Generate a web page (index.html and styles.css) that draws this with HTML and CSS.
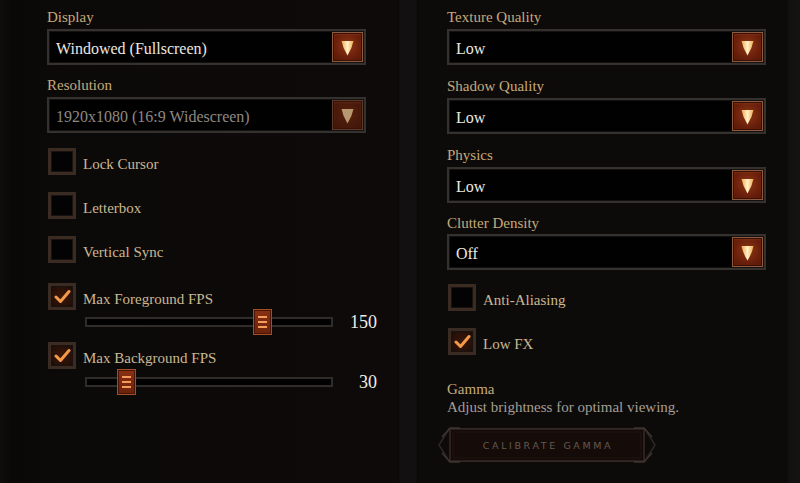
FILE: index.html
```html
<!DOCTYPE html>
<html>
<head>
<meta charset="utf-8">
<link rel="stylesheet" href="styles.css">
</head>
<body>
<div class="screen">
  <section class="panel left">
    <div class="field">
      <div class="label">Display</div>
      <div class="select">
        <span class="value">Windowed (Fullscreen)</span>
        <span class="arrow"><svg width="13" height="16" viewBox="0 0 13 16"><defs><linearGradient id="ag" x1="0" y1="0" x2="1" y2="0"><stop offset="0" stop-color="#f0a850"/><stop offset="0.5" stop-color="#fff2c8"/><stop offset="1" stop-color="#f0a850"/></linearGradient></defs><path d="M0.5 1 H12.5 Q11 8.5 6.5 15.5 Q2 8.5 0.5 1 Z" fill="url(#ag)"/></svg></span>
      </div>
    </div>
    <div class="field">
      <div class="label">Resolution</div>
      <div class="select disabled">
        <span class="value">1920x1080 (16:9 Widescreen)</span>
        <span class="arrow"><svg width="13" height="16" viewBox="0 0 13 16"><path d="M0.5 1 H12.5 Q11 8.5 6.5 15.5 Q2 8.5 0.5 1 Z" fill="#b89870"/></svg></span>
      </div>
    </div>
    <div class="checks">
      <div class="check"><span class="box"></span><span class="ctext">Lock Cursor</span></div>
      <div class="check"><span class="box"></span><span class="ctext">Letterbox</span></div>
      <div class="check"><span class="box"></span><span class="ctext">Vertical Sync</span></div>
      <div class="check on fps"><span class="box"><svg width="17" height="15" viewBox="0 0 17 15"><path d="M2 8 L6.5 12.5 L15 2.5" fill="none" stroke="#f39a48" stroke-width="3" stroke-linecap="round" stroke-linejoin="round"/></svg></span><span class="ctext">Max Foreground FPS</span></div>
      <div class="slider-row">
        <div class="track"><span class="thumb" style="left:166px"><i></i><i></i><i></i></span></div>
        <span class="num">150</span>
      </div>
      <div class="check on bg"><span class="box"><svg width="17" height="15" viewBox="0 0 17 15"><path d="M2 8 L6.5 12.5 L15 2.5" fill="none" stroke="#f39a48" stroke-width="3" stroke-linecap="round" stroke-linejoin="round"/></svg></span><span class="ctext">Max Background FPS</span></div>
      <div class="slider-row">
        <div class="track"><span class="thumb" style="left:30px"><i></i><i></i><i></i></span></div>
        <span class="num">30</span>
      </div>
    </div>
  </section>
  <div class="divider"></div>
  <section class="panel right">
    <div class="field wide">
      <div class="label">Texture Quality</div>
      <div class="select">
        <span class="value">Low</span>
        <span class="arrow"><svg width="13" height="16" viewBox="0 0 13 16"><path d="M0.5 1 H12.5 Q11 8.5 6.5 15.5 Q2 8.5 0.5 1 Z" fill="url(#ag)"/></svg></span>
      </div>
    </div>
    <div class="field wide">
      <div class="label">Shadow Quality</div>
      <div class="select">
        <span class="value">Low</span>
        <span class="arrow"><svg width="13" height="16" viewBox="0 0 13 16"><path d="M0.5 1 H12.5 Q11 8.5 6.5 15.5 Q2 8.5 0.5 1 Z" fill="url(#ag)"/></svg></span>
      </div>
    </div>
    <div class="field wide">
      <div class="label">Physics</div>
      <div class="select">
        <span class="value">Low</span>
        <span class="arrow"><svg width="13" height="16" viewBox="0 0 13 16"><path d="M0.5 1 H12.5 Q11 8.5 6.5 15.5 Q2 8.5 0.5 1 Z" fill="url(#ag)"/></svg></span>
      </div>
    </div>
    <div class="field wide last">
      <div class="label">Clutter Density</div>
      <div class="select">
        <span class="value">Off</span>
        <span class="arrow"><svg width="13" height="16" viewBox="0 0 13 16"><path d="M0.5 1 H12.5 Q11 8.5 6.5 15.5 Q2 8.5 0.5 1 Z" fill="url(#ag)"/></svg></span>
      </div>
    </div>
    <div class="checks rchecks">
      <div class="check"><span class="box"></span><span class="ctext">Anti-Aliasing</span></div>
      <div class="check on"><span class="box"><svg width="17" height="15" viewBox="0 0 17 15"><path d="M2 8 L6.5 12.5 L15 2.5" fill="none" stroke="#f39a48" stroke-width="3" stroke-linecap="round" stroke-linejoin="round"/></svg></span><span class="ctext">Low FX</span></div>
    </div>
    <div class="gamma">
      <div class="label">Gamma</div>
      <div class="desc">Adjust brightness for optimal viewing.</div>
    </div>
    <div class="calib">
      <svg class="frame" width="218" height="42" viewBox="0 0 218 42">
        <path d="M1 21 L11 5 L207 5 L217 21 L207 37 L11 37 Z" fill="none" stroke="#2e2724" stroke-width="1.5"/>
        <rect x="12" y="5" width="194" height="32" fill="#120a08" stroke="#3a2a26" stroke-width="1.5"/>
        <rect x="15" y="8" width="188" height="26" fill="#150b09" stroke="#231513" stroke-width="1"/>
        <path d="M4 13 L12 4 L22 4 M4 29 L12 38 L22 38 M214 13 L206 4 L196 4 M214 29 L206 38 L196 38" fill="none" stroke="#3d3430" stroke-width="1.5"/>
      </svg>
      <span class="ctitle">CALIBRATE GAMMA</span>
    </div>
  </section>
  <div class="edge"></div>
</div>
</body>
</html>
```

FILE: styles.css
```css
* { box-sizing: border-box; }
html, body { margin: 0; padding: 0; }
body {
  width: 800px;
  height: 483px;
  overflow: hidden;
  background: #0b0908;
  font-family: "Liberation Serif", "DejaVu Serif", serif;
}
.screen {
  display: flex;
  width: 800px;
  height: 483px;
}
.panel {
  display: flex;
  flex-direction: column;
  padding-top: 8px;
}
.panel.left {
  width: 398px;
  padding-left: 47px;
  background: linear-gradient(90deg, #100e0d 0px, #0a0807 12px, #0c0a09 60px, #0d0a09 100%);
}
.divider {
  width: 20px;
  background: linear-gradient(90deg, #060505 0px, #121010 2px, #131110 18px, #060505 20px);
}
.panel.right {
  width: 367px;
  padding-left: 29px;
  background: #0d0b0a;
}
.edge {
  flex: 1;
  background: linear-gradient(90deg, #080707 0px, #121010 4px, #151212 100%);
}
.field {
  width: 319px;
  margin-bottom: 11px;
}
.field.wide { margin-bottom: 12px; }
.field.wide.last { margin-bottom: 10px; }
.field.wide.last .label { margin-top: -1px; margin-bottom: 2px; }
.label {
  font-size: 15px;
  line-height: 18px;
  height: 18px;
  color: #c6a97b;
  margin-bottom: 3px;
}
.select {
  height: 36px;
  display: flex;
  align-items: center;
  justify-content: space-between;
  background: #020101;
  border: 2px solid #35312e;
  box-shadow: inset 0 0 0 1px #141211;
  padding: 0 1px 0 7px;
}
.value {
  font-size: 16px;
  line-height: 18px;
  padding-top: 4px;
  color: #ece8e0;
}
.select.disabled .value { color: #8d8883; }
.arrow {
  width: 31px;
  height: 30px;
  display: flex;
  align-items: center;
  justify-content: center;
  padding-top: 1px;
  border: 1px solid #8e5a3e;
  background: radial-gradient(circle at 50% 45%, #8e3614 0%, #6a1f0b 60%, #511608 100%);
  box-shadow: inset 0 0 0 1px #3a1006, inset 0 1px 3px rgba(255,160,110,0.25);
}
.select.disabled .arrow {
  border-color: #5a3a2a;
  background: radial-gradient(circle at 50% 45%, #5a200c 0%, #44180a 70%, #3a1408 100%);
}
.checks {
  display: flex;
  flex-direction: column;
  margin-top: 4px;
}
.rchecks { margin-top: 4px; }
.check {
  display: flex;
  align-items: center;
  height: 27px;
  margin-bottom: 17px;
  margin-left: 1px;
}
.box {
  width: 28px;
  height: 27px;
  border: 3px solid #3a2c23;
  background: #040303;
  box-shadow: inset 0 0 0 1px #1a1210;
  display: flex;
  align-items: center;
  justify-content: center;
  flex-shrink: 0;
}
.check.on .box {
  background: radial-gradient(circle, #3c160a 0%, #251008 70%, #140806 100%);
}
.ctext {
  margin-left: 7px;
  font-size: 15px;
  line-height: 18px;
  padding-top: 4px;
  color: #cbb792;
}
.check.fps { margin-top: 3px; margin-bottom: 0; }
.check.bg { margin-top: 7px; margin-bottom: 0; }
.slider-row {
  display: flex;
  align-items: center;
  width: 330px;
  height: 26px;
  padding-left: 38px;
}
.check.fps + .slider-row { margin-top: -1px; }
.track {
  position: relative;
  width: 248px;
  height: 10px;
  border: 2px solid #2f2c29;
  background: #020101;
}
.thumb {
  position: absolute;
  top: -10px;
  width: 19px;
  height: 26px;
  background: linear-gradient(180deg, #8a3012, #6a220c);
  border: 1px solid #a24e26;
  box-shadow: inset 0 0 0 1px #4a1406;
  display: flex;
  flex-direction: column;
  align-items: center;
  justify-content: center;
  gap: 3px;
}
.thumb i {
  display: block;
  width: 9px;
  height: 2px;
  background: #f49a5c;
}
.num {
  flex: 1;
  text-align: right;
  font-size: 18px;
  line-height: 20px;
  color: #f1ede6;
}
.gamma {
  margin-top: 8px;
}
.gamma .label { margin-bottom: 0; }
.desc {
  font-size: 15px;
  line-height: 18px;
  color: #a59d93;
}
.calib {
  position: relative;
  margin-top: 8px;
  margin-left: -9px;
  width: 218px;
  height: 42px;
  display: flex;
  align-items: center;
  justify-content: center;
}
.frame {
  position: absolute;
  left: 0;
  top: 0;
}
.ctitle {
  position: relative;
  font-family: "DejaVu Sans", sans-serif;
  font-size: 9.5px;
  letter-spacing: 2.6px;
  color: #65594f;
  padding-left: 2px;
}
```
